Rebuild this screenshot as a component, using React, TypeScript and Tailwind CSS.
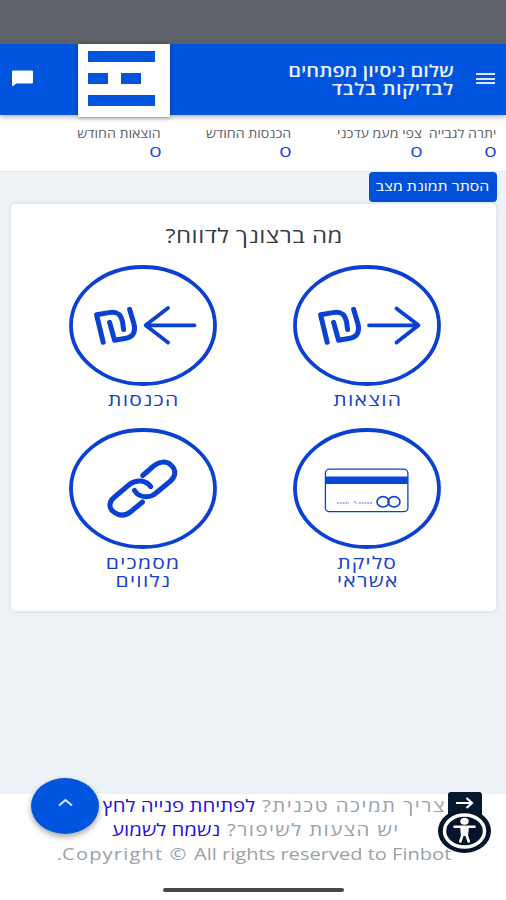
import React from 'react'
import clsx from 'clsx'

interface ChildrenProps {
  children: React.ReactNode;
  className?: string;
}

// single line of wide-set text
const Wide: React.FC<ChildrenProps> = ({ children, className }) => (
  <span className={clsx('block w-fit whitespace-nowrap', className)}>{children}</span>
)

const Shekel = () => (
  <>
    <path d="M34.2 77.3 L27.6 49.8 L40 47.6 C49 46 52 50 53.5 56.5 L54.6 64.5" strokeWidth="5" />
    <path d="M40.6 57.3 L45.6 75.3 L57 73.3 C65 71.5 66.6 66 65 59 L60.6 44.3" strokeWidth="5" />
  </>
)

const ExpenseIcon = () => (
  <>
    <Shekel />
    <path d="M76 60.3 H125 M103.5 43.5 L125.5 60.3 L103.5 77.5" />
  </>
)

const IncomeIcon = () => (
  <>
    <Shekel />
    <path d="M125.5 60.3 H78 M99 43 L76.6 60.3 L99 77.5" />
  </>
)

const CardIcon = () => (
  <>
    <rect x="32.4" y="41.2" width="82.5" height="42.5" rx="4" strokeWidth="1.3" />
    <rect x="32.4" y="48.5" width="82.5" height="7.5" fill="#0a48d4" stroke="none" />
    <ellipse cx="90" cy="73.8" rx="6" ry="5.2" strokeWidth="1.6" />
    <ellipse cx="101" cy="73.8" rx="6" ry="5.2" strokeWidth="1.6" />
    <path d="M44 75 H56 M61 73.5 L64 75.5 M66 75 H79" strokeWidth="2" strokeDasharray="1.8 1" strokeLinecap="butt" opacity="0.4" />
  </>
)

const LinkIcon = () => (
  <>
    <path d="M73.7 47.5 L84 38.5 C90 33.5 97 32.5 102 37 C107.5 42 107 48.5 101 53.5 L87 65 C81 70.5 70 70 65.5 62.5" strokeWidth="5" />
    <path d="M81.7 58.7 C77 51.5 67 51.5 61 56 L45 69.5 C39 74.5 40 81 45.5 84.5 C51 88.5 57 87.5 62 83.5 L73.5 74" strokeWidth="5" />
  </>
)

interface ActionProps {
  icon: React.ReactNode;
  lines: string[];
}

const Action: React.FC<ActionProps> = ({ icon, lines }) => (
  <button className="flex flex-col items-center w-[148px] h-[163px]">
    <svg
      viewBox="0 0 148 121"
      className="w-[148px] h-[121px] shrink-0"
      fill="none"
      stroke="#0a41d2"
      strokeWidth="3.8"
      strokeLinecap="round"
      strokeLinejoin="round"
    >
      <ellipse cx="74" cy="60.5" rx="72" ry="58.5" />
      {icon}
    </svg>
    <div className="mt-[5px] flex flex-col items-center pl-[2px] text-[17px] leading-[17.5px] text-[#1740cc]">
      {lines.map((line) => (
        <Wide key={line} className="scale-x-[1.24] tracking-[1px]">{line}</Wide>
      ))}
    </div>
  </button>
)

interface StatProps {
  label: string;
  className: string;
}

const Stat: React.FC<StatProps> = ({ label, className }) => (
  <div className={clsx('shrink-0', className)}>
    <Wide className="mt-px origin-right scale-x-[1.18] text-[12px] leading-[18px] text-[#5c6066]">{label}</Wide>
    <Wide className="-mt-px -mr-px origin-right scale-x-[1.45] text-[15px] leading-[18px] text-[#2347dc]">0</Wide>
  </div>
)

const App = () => {
  return (
    <div
      dir="rtl"
      className="relative flex h-[900px] w-[506px] flex-col overflow-hidden bg-[#edf2f7] font-['Open_Sans','Noto_Sans',sans-serif]"
    >
      <div className="h-[44px] shrink-0 bg-[#5f646b]" />

      <header className="relative z-10 flex h-[71px] shrink-0 bg-[#0054dd] shadow-[0_2px_5px_rgba(0,0,0,0.3)]">
        <button className="mr-[11px] mt-[29px] flex h-[11px] w-[19px] flex-col justify-between">
          <span className="h-[2px] w-full bg-[#dfe6fb]" />
          <span className="h-[2px] w-full bg-[#dfe6fb]" />
          <span className="h-[2px] w-full bg-[#dfe6fb]" />
        </button>
        <div className="mr-[22px] mt-[18px] w-[284px] text-[16.5px] font-semibold leading-[18px] text-[#eef2ff]">
          <Wide className="origin-right scale-x-[1.21]">שלום ניסיון מפתחים</Wide>
          <Wide className="origin-right scale-x-[1.21] tracking-[0.4px]">לבדיקות בלבד</Wide>
        </div>
        <div className="h-[73px] w-[92px] shrink-0 bg-white pr-[15px] pt-[7px] shadow-[0_1px_4px_rgba(0,0,0,0.35)]">
          <div className="flex h-[55px] w-[67px] flex-col justify-between">
            <div className="h-[11px] bg-[#0054dd]" />
            <div className="flex h-[11px] justify-end gap-[13px]">
              <div className="w-[20px] bg-[#0054dd]" />
              <div className="w-[20px] bg-[#0054dd]" />
            </div>
            <div className="h-[11px] bg-[#0054dd]" />
          </div>
        </div>
        <svg viewBox="0 0 21 16" className="mr-auto ml-[11.5px] mt-[26px] h-[17px] w-[21px] shrink-0" fill="white">
          <path d="M1 0 H20 Q21 0 21 1 V12 Q21 13 20 13 H4.5 L0 16 V1 Q0 0 1 0 Z" />
        </svg>
      </header>

      <section className="flex h-[57px] shrink-0 border-b border-[#e3e9ec] bg-white pr-[10px] pt-[9px]">
        <Stat label="יתרה לגבייה" className="w-[74px]" />
        <Stat label="צפי מעמ עדכני" className="w-[131px]" />
        <Stat label="הכנסות החודש" className="w-[130px]" />
        <Stat label="הוצאות החודש" className="w-[100px]" />
      </section>

      <main className="flex h-[622px] shrink-0 flex-col">
        <button className="mr-[9px] flex h-[30px] w-[128px] items-center justify-center rounded-[4px] bg-[#0050d8] text-[13px] font-medium text-white">
          <Wide className="scale-x-[1.22]">הסתר תמונת מצב</Wide>
        </button>
        <div className="mr-[10px] mt-[2px] h-[407px] w-[485px] rounded-[4px] bg-white pt-[18px] shadow-[0_0_4px_rgba(0,0,0,0.12)]">
          <h1 className="flex justify-center text-[20px] leading-[28px] text-[#333d42]">
            <Wide className="scale-x-[1.2] tracking-[0.4px]">מה ברצונך לדווח?</Wide>
          </h1>
          <div className="mt-[15px] grid grid-cols-[148px_148px] justify-center gap-x-[76px] pl-[2px]">
            <Action icon={<ExpenseIcon />} lines={['הוצאות']} />
            <Action icon={<IncomeIcon />} lines={['הכנסות']} />
            <Action icon={<CardIcon />} lines={['סליקת', 'אשראי']} />
            <Action icon={<LinkIcon />} lines={['מסמכים', 'נלווים']} />
          </div>
        </div>
      </main>

      <footer className="flex h-[106px] shrink-0 flex-col bg-white text-[17px] text-[#98a1a7]">
        <Wide className="mr-[60px] origin-right scale-x-[1.2] leading-6">
          <span className="tracking-[1.25px]">צריך תמיכה טכנית? </span>
          <a className="text-[#2210df]">לפתיחת פנייה לחץ</a>
        </Wide>
        <Wide className="mr-[106px] origin-right scale-x-[1.2] leading-6">
          <span className="tracking-[1.2px]">יש הצעות לשיפור? </span>
          <a className="text-[#2210df]">נשמח לשמוע</a>
        </Wide>
        <Wide className="mr-[55px] origin-right scale-x-[1.18] leading-6">
          <span className="tracking-[1px]">Copyright © </span>All rights reserved to Finbot.
        </Wide>
        <div className="mr-[162px] mt-[22px] h-[4px] w-[181px] rounded-full bg-[#48484a]" />
      </footer>

      <button className="absolute left-[31px] top-[778px] flex h-[56px] w-[68px] justify-center rounded-[50%] bg-[#0054dd] pt-[20px] shadow-[0_3px_6px_rgba(0,0,0,0.35)]">
        <svg viewBox="0 0 15 9" className="h-[9px] w-[15px]" fill="none" stroke="#dce6ff" strokeWidth="2">
          <path d="M1 7.5 L7.5 2 L14 7.5" />
        </svg>
      </button>

      <button className="absolute left-[438px] top-[792px]">
        <svg viewBox="0 0 53 62" className="h-[62px] w-[53px]">
          <rect x="10" y="0" width="34" height="35" rx="3" fill="#06192e" />
          <path d="M18 11 H34 M28.5 6 L34 11 L28.5 16" fill="none" stroke="white" strokeWidth="2.2" />
          <ellipse cx="26.5" cy="39" rx="26.5" ry="22" fill="#06142b" />
          <ellipse cx="26.5" cy="39" rx="20" ry="16" fill="none" stroke="white" strokeWidth="3.4" />
          <ellipse cx="26.5" cy="29.3" rx="4.2" ry="3.5" fill="white" />
          <path d="M16.5 34.7 H36.5 M24.8 42 L22.3 49.5 M28.2 42 L30.7 49.5" fill="none" stroke="white" strokeWidth="2.6" strokeLinecap="round" />
          <path d="M22 34 H31 L30 44 H23 Z" fill="white" />
        </svg>
      </button>
    </div>
  )
}

export default App
